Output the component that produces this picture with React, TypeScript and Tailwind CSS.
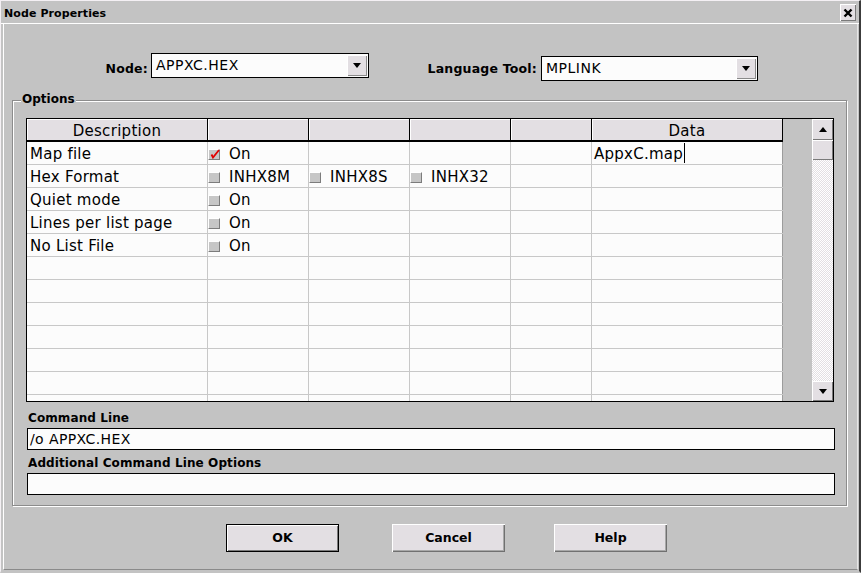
import React from "react";

type Cell = { text?: string; check?: "on" | "off"; cursor?: boolean };

const colW = ["w-[181px]", "w-[101px]", "w-[101px]", "w-[101px]", "w-[81px]", "w-[191px]"];

const rows: Cell[][] = [
  [{ text: "Map file" }, { check: "on", text: "On" }, {}, {}, {}, { text: "AppxC.map", cursor: true }],
  [{ text: "Hex Format" }, { check: "off", text: "INHX8M" }, { check: "off", text: "INHX8S" }, { check: "off", text: "INHX32" }, {}, {}],
  [{ text: "Quiet mode" }, { check: "off", text: "On" }, {}, {}, {}, {}],
  [{ text: "Lines per list page" }, { check: "off", text: "On" }, {}, {}, {}, {}],
  [{ text: "No List File" }, { check: "off", text: "On" }, {}, {}, {}, {}],
  [{}, {}, {}, {}, {}, {}],
  [{}, {}, {}, {}, {}, {}],
  [{}, {}, {}, {}, {}, {}],
  [{}, {}, {}, {}, {}, {}],
  [{}, {}, {}, {}, {}, {}],
  [{}, {}, {}, {}, {}, {}],
  [{}, {}, {}, {}, {}, {}],
];

function Check({ checked }: { checked?: boolean }) {
  return (
    <span className="relative inline-block w-[12px] h-[11px] shrink-0 bg-[#c6c6c6] border border-t-white border-l-white border-r-[#7c7c7c] border-b-[#7c7c7c]">
      {checked && (
        <svg className="absolute left-[1px] top-[-2px]" width="10" height="11" viewBox="0 0 10 11">
          <path d="M1.5 6.5 L3 9.5 L9 2" stroke="#e00000" strokeWidth="1.8" fill="none" />
        </svg>
      )}
    </span>
  );
}

function DownTri() {
  return <span className="w-0 h-0 border-l-[4px] border-r-[4px] border-t-[5px] border-l-transparent border-r-transparent border-t-black" />;
}
function UpTri() {
  return <span className="w-0 h-0 border-l-[4px] border-r-[4px] border-b-[5px] border-l-transparent border-r-transparent border-b-black" />;
}

function Combo({ value, w, extra }: { value: string; w: string; extra?: string }) {
  return (
    <div className={`${w} ${extra ?? ""} h-[25px] bg-[#fcfcfc] border border-black flex items-stretch p-[1px]`}>
      <span className="flex-1 pl-[3px] flex items-center text-[14px] tracking-[0.5px] text-black">{value}</span>
      <span className="w-[20px] bg-[#e3dfe3] flex items-center justify-center shadow-[inset_1px_1px_0_#ffffff,inset_-1px_-1px_0_#8a8a8a]">
        <DownTri />
      </span>
    </div>
  );
}

function Btn({ label, def }: { label: string; def?: boolean }) {
  return (
    <div
      className={
        def
          ? "w-[113px] h-[28px] bg-[#e3dfe3] border border-black flex items-center justify-center text-[12.5px] font-bold shadow-[inset_1px_1px_0_#ffffff,inset_-1px_-1px_0_#7a7a7a]"
          : "w-[113px] h-[28px] bg-[#e3dfe3] flex items-center justify-center text-[12.5px] font-bold shadow-[inset_1px_1px_0_#ffffff,inset_-1px_-1px_0_#707070,inset_-2px_-2px_0_#a8a8a8]"
      }
    >
      {label}
    </div>
  );
}

export default function App() {
  return (
    <div className="w-[861px] h-[573px] bg-[#c3c3c3] flex flex-col overflow-hidden text-black font-['DejaVu_Sans',sans-serif] border-t border-l border-r-2 border-b-2 border-t-[#f4f0f4] border-l-[#f4f0f4] border-r-[#3c3c3c] border-b-[#c3c3c3]">
      {/* Title bar */}
      <div className="h-[23px] shrink-0 flex items-start justify-between border-b border-b-white">
        <span className="pl-[3px] pt-[6px] text-[11px] font-bold tracking-[0.1px] leading-[13px]">Node Properties</span>
        <span className="mt-[3px] mr-[3px] w-[16px] h-[17px] bg-[#e3dfe3] flex items-center justify-center shadow-[inset_1px_1px_0_#ffffff,inset_-1px_-1px_0_#7a7a7a]">
          <svg width="10" height="10" viewBox="0 0 10 10">
            <path d="M1.5 1.5 L8.5 8.5 M8.5 1.5 L1.5 8.5" stroke="#000" strokeWidth="2.4" />
          </svg>
        </span>
      </div>

      {/* Body */}
      <div className="flex-1 flex flex-col ml-[2px] mr-[1px] mb-[1px] border-l border-l-white border-r border-r-[#e6e6e6] border-b border-b-[#8a8a8a]">
        {/* top row */}
        <div className="pt-[29px] h-[56px] shrink-0 flex items-start">
          <span className="w-[144px] mt-[8px] text-right text-[12.5px] font-bold tracking-[0.2px] leading-[15px]">Node:</span>
          <Combo value="APPXC.HEX" w="w-[218px]" extra="ml-[3px]" />
          <span className="w-[168px] mt-[8px] text-right text-[12.5px] font-bold tracking-[0.2px] leading-[15px]">Language Tool:</span>
          <Combo value="MPLINK" w="w-[217px]" extra="ml-[4px] mt-[3px]" />
        </div>

        {/* Options group */}
        <div className="relative mt-[20px] ml-[8px] w-[835px] h-[406px] shrink-0 border border-[#8c8c8c] shadow-[inset_1px_1px_0_#ffffff,1px_1px_0_#ffffff] pl-[13px] pt-[17px] flex flex-col">
          <span className="absolute left-[8px] top-[-10px] px-[1px] bg-[#c3c3c3] text-[12px] font-bold leading-[16px]">Options</span>

          {/* table */}
          <div className="w-[808px] h-[284px] shrink-0 border border-black bg-[#c3c3c3] flex overflow-hidden">
            <div className="w-[756px] flex flex-col bg-[#fcfcfc] overflow-hidden">
              <div className="h-[23px] shrink-0 flex border-b-2 border-b-black">
                {["Description", "", "", "", "", "Data"].map((h, i) => (
                  <div
                    key={i}
                    className={`${colW[i]} h-full shrink-0 bg-[#e3dfe3] border-r border-r-black shadow-[inset_1px_1px_0_#ffffff] flex items-center justify-center pt-[4px] text-[15px] tracking-[0.3px]`}
                  >
                    {h}
                  </div>
                ))}
              </div>
              {rows.map((r, ri) => (
                <div key={ri} className="h-[23px] shrink-0 flex border-b border-b-[#c8c8c8]">
                  {r.map((c, ci) => (
                    <div
                      key={ci}
                      className={`${colW[ci]} h-full shrink-0 flex items-center pt-[2px] text-[15px] tracking-[0.25px] whitespace-nowrap ${
                        ci === 5 ? "border-r border-r-[#9c9c9c] pl-[2px]" : "border-r border-r-[#c8c8c8]"
                      } ${ci === 0 ? "pl-[3px]" : ""}`}
                    >
                      {c.check && <Check checked={c.check === "on"} />}
                      {c.text && <span className={c.check ? "ml-[9px]" : ""}>{c.text}</span>}
                      {c.cursor && <span className="relative top-[-1px] ml-[1px] w-[1px] h-[20px] bg-black" />}
                    </div>
                  ))}
                </div>
              ))}
            </div>
            <div className="w-[29px] shrink-0" />
            {/* scrollbar */}
            <div className="w-[21px] shrink-0 flex flex-col">
              <div className="h-[21px] shrink-0 bg-[#e3dfe3] flex items-center justify-center shadow-[inset_1px_1px_0_#ffffff,inset_-1px_-1px_0_#7a7a7a]">
                <UpTri />
              </div>
              <div className="h-[20px] shrink-0 bg-[#e3dfe3] shadow-[inset_1px_1px_0_#ffffff,inset_-1px_-1px_0_#7a7a7a]" />
              <div className="flex-1 bg-[image:repeating-conic-gradient(#e3dfe3_0_25%,#ffffff_0_50%)] bg-[length:2px_2px] bg-size-[2px_2px]" />
              <div className="h-[20px] shrink-0 bg-[#e3dfe3] flex items-center justify-center shadow-[inset_1px_1px_0_#ffffff,inset_-1px_-1px_0_#7a7a7a]">
                <DownTri />
              </div>
            </div>
          </div>

          <span className="mt-[8px] ml-[2px] h-[16px] text-[12px] font-bold leading-[16px] tracking-[0.1px]">Command Line</span>
          <div className="mt-[2px] ml-[1px] w-[808px] h-[22px] shrink-0 bg-[#fcfcfc] border border-black flex items-center pl-[2px] text-[14px] tracking-[0.4px]">
            /o APPXC.HEX
          </div>
          <span className="mt-[5px] ml-[2px] h-[16px] text-[12px] font-bold leading-[16px] tracking-[0.1px]">Additional Command Line Options</span>
          <div className="mt-[2px] ml-[1px] w-[808px] h-[22px] shrink-0 bg-[#fcfcfc] border border-black" />
        </div>

        {/* buttons */}
        <div className="mt-[18px] flex items-start">
          <div className="ml-[222px]">
            <Btn label="OK" def />
          </div>
          <div className="ml-[53px]">
            <Btn label="Cancel" />
          </div>
          <div className="ml-[49px]">
            <Btn label="Help" />
          </div>
        </div>
      </div>
    </div>
  );
}
